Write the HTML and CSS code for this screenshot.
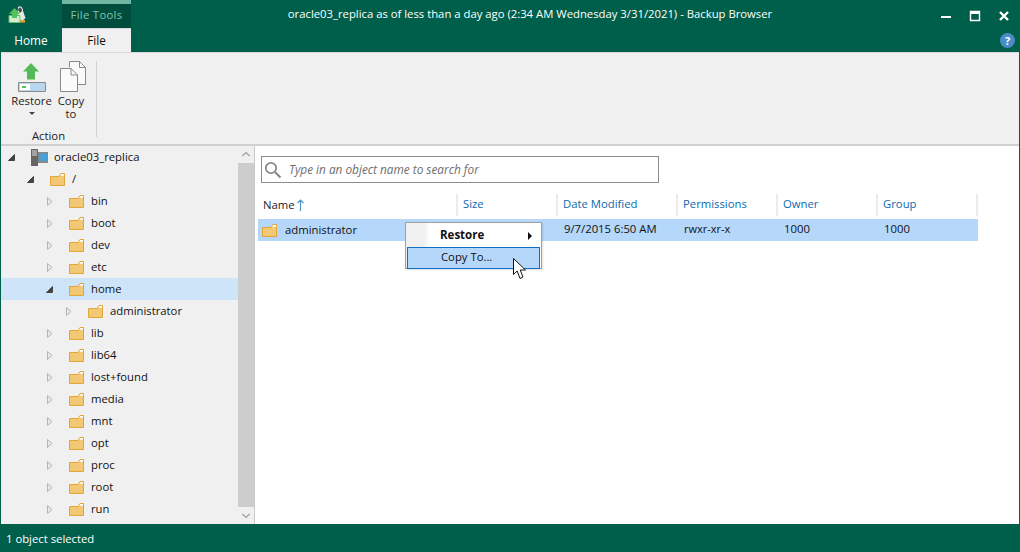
FILE: index.html
```html
<!DOCTYPE html>
<html lang="en">
<head>
<meta charset="utf-8">
<title>Backup Browser</title>
<link rel="stylesheet" href="styles.css">
</head>
<body>
<svg class="defs" width="0" height="0" aria-hidden="true">
  <symbol id="folder" viewBox="0 0 15 14">
    <path d="M.5 4.5H9L11 1.5H14.5V13.5H.5Z" fill="#f3c874" stroke="#e2a537"/>
    <path d="M10 3.8L11.4 2H14V3.8Z" fill="#fff"/>
  </symbol>
  <symbol id="closed" viewBox="0 0 6 9">
    <path d="M.5.5L5 4.5L.5 8.5Z" fill="#e8e8e8" stroke="#b4b4b4"/>
  </symbol>
  <symbol id="open" viewBox="0 0 7 7">
    <path d="M6.5.5V6.5H.5Z" fill="#444" stroke="#444"/>
  </symbol>
</svg>
<div class="window">
  <header class="top">
    <div class="titlebar">
      <div class="app-slot">
        <svg width="18" height="17" viewBox="0 0 18 17">
          <path d="M10 1C13 -1 15 2 15 5L17.500 12L14 15H9Z" fill="#e6ece8"/>
          <path d="M11 1.500C13 1 14 3 14 5L12 7L10 4Z" fill="#4a4a4a"/>
          <path d="M12 14H17V16.500H12Z" fill="#f0a030"/>
          <path d="M1 9.500H12V16.500H1Z" fill="#d6ecd0" stroke="#63bf6b"/>
          <path d="M6.500 2L12 8H9V12H4V8H1Z" fill="#4fc25a"/>
        </svg>
      </div>
      <div class="ctx-tab">File Tools</div>
      <div class="title">oracle03_replica as of less than a day ago (2:34 AM Wednesday 3/31/2021) - Backup Browser</div>
      <div class="controls">
        <svg width="12" height="12" viewBox="0 0 12 12"><path d="M1 6H11V8H1Z" fill="#fff"/></svg>
        <svg width="12" height="12" viewBox="0 0 12 12"><path d="M1.5 1.5H10.5V10.5H1.5Z" fill="none" stroke="#fff" stroke-width="1.4"/><path d="M1 1H11V4H1Z" fill="#fff"/></svg>
        <svg width="12" height="12" viewBox="0 0 12 12"><path d="M2 2L10 10M10 2L2 10" stroke="#fff" stroke-width="2.4"/></svg>
      </div>
    </div>
    <div class="tabbar">
      <div class="tab">Home</div>
      <div class="tab tab-active">File</div>
      <div class="help">?</div>
    </div>
  </header>
  <section class="ribbon">
    <div class="group">
      <div class="group-items">
        <div class="rbtn rbtn-restore">
          <svg width="30" height="30" viewBox="0 0 30 30">
            <path d="M14 0L22 8.500H18V16.500H10V8.500H6Z" fill="#55b957"/>
            <path d="M1.5 19.5H28.5V28.5H1.5Z" fill="#bad6ef" stroke="#8a8a8a"/>
            <path d="M3 21H13V27H3Z" fill="#fff"/>
            <path d="M5 23H9V25H5Z" fill="#55c157"/>
          </svg>
          <span class="rlabel">Restore</span>
          <span class="caret"></span>
        </div>
        <div class="rbtn rbtn-copy">
          <svg class="copy-icon" width="26" height="31" viewBox="0 0 26 31">
            <path d="M9.5 6V.5H19.5L25.5 6.5V23.5H16" fill="#fafafa" stroke="#8a8a8a"/>
            <path d="M19.5.5V6.5H25.5" fill="none" stroke="#8a8a8a"/>
            <path d="M.5 7.5H11L17.5 14V30.5H.5Z" fill="#fafafa" stroke="#8a8a8a"/>
            <path d="M11 7.5V14H17.5" fill="none" stroke="#8a8a8a"/>
          </svg>
          <span class="rlabel">Copy<br>to</span>
        </div>
      </div>
      <div class="group-name">Action</div>
    </div>
  </section>
  <main class="content">
    <aside class="tree-pane">
      <div class="tree">
        <div class="node d0"><svg class="tw" width="7" height="7"><use href="#open"/></svg><svg class="server" width="17" height="17" viewBox="0 0 17 17"><path d="M0 0H7V17H0Z" fill="#666"/><path d="M1 2H6M1 4H6M1 6H6" stroke="#ddd"/><path d="M7 3H17V14H7Z" fill="#888"/><path d="M9 4.500H16V12H9Z" fill="#4a9fd6"/></svg><span>oracle03_replica</span></div>
        <div class="node d1"><svg class="tw" width="7" height="7"><use href="#open"/></svg><svg class="fd" width="15" height="14"><use href="#folder"/></svg><span>/</span></div>
        <div class="node d2"><svg class="tw tw-c" width="6" height="9"><use href="#closed"/></svg><svg class="fd" width="15" height="14"><use href="#folder"/></svg><span>bin</span></div>
        <div class="node d2"><svg class="tw tw-c" width="6" height="9"><use href="#closed"/></svg><svg class="fd" width="15" height="14"><use href="#folder"/></svg><span>boot</span></div>
        <div class="node d2"><svg class="tw tw-c" width="6" height="9"><use href="#closed"/></svg><svg class="fd" width="15" height="14"><use href="#folder"/></svg><span>dev</span></div>
        <div class="node d2"><svg class="tw tw-c" width="6" height="9"><use href="#closed"/></svg><svg class="fd" width="15" height="14"><use href="#folder"/></svg><span>etc</span></div>
        <div class="node d2 node-sel"><svg class="tw" width="7" height="7"><use href="#open"/></svg><svg class="fd" width="15" height="14"><use href="#folder"/></svg><span>home</span></div>
        <div class="node d3"><svg class="tw tw-c" width="6" height="9"><use href="#closed"/></svg><svg class="fd" width="15" height="14"><use href="#folder"/></svg><span>administrator</span></div>
        <div class="node d2"><svg class="tw tw-c" width="6" height="9"><use href="#closed"/></svg><svg class="fd" width="15" height="14"><use href="#folder"/></svg><span>lib</span></div>
        <div class="node d2"><svg class="tw tw-c" width="6" height="9"><use href="#closed"/></svg><svg class="fd" width="15" height="14"><use href="#folder"/></svg><span>lib64</span></div>
        <div class="node d2"><svg class="tw tw-c" width="6" height="9"><use href="#closed"/></svg><svg class="fd" width="15" height="14"><use href="#folder"/></svg><span>lost+found</span></div>
        <div class="node d2"><svg class="tw tw-c" width="6" height="9"><use href="#closed"/></svg><svg class="fd" width="15" height="14"><use href="#folder"/></svg><span>media</span></div>
        <div class="node d2"><svg class="tw tw-c" width="6" height="9"><use href="#closed"/></svg><svg class="fd" width="15" height="14"><use href="#folder"/></svg><span>mnt</span></div>
        <div class="node d2"><svg class="tw tw-c" width="6" height="9"><use href="#closed"/></svg><svg class="fd" width="15" height="14"><use href="#folder"/></svg><span>opt</span></div>
        <div class="node d2"><svg class="tw tw-c" width="6" height="9"><use href="#closed"/></svg><svg class="fd" width="15" height="14"><use href="#folder"/></svg><span>proc</span></div>
        <div class="node d2"><svg class="tw tw-c" width="6" height="9"><use href="#closed"/></svg><svg class="fd" width="15" height="14"><use href="#folder"/></svg><span>root</span></div>
        <div class="node d2"><svg class="tw tw-c" width="6" height="9"><use href="#closed"/></svg><svg class="fd" width="15" height="14"><use href="#folder"/></svg><span>run</span></div>
        <div class="node d2"><svg class="fd" width="15" height="14"><use href="#folder"/></svg></div>
      </div>
      <div class="scrollbar">
        <svg class="sb-arrow" width="17" height="17" viewBox="0 0 17 17"><path d="M4.500 10L8.500 6.500L12.500 10" fill="none" stroke="#a6a6a6" stroke-width="1.500"/></svg>
        <div class="sb-thumb"></div>
        <svg class="sb-arrow" width="17" height="17" viewBox="0 0 17 17"><path d="M4.500 7L8.500 10.500L12.500 7" fill="none" stroke="#a6a6a6" stroke-width="1.500"/></svg>
      </div>
    </aside>
    <section class="list-pane">
      <div class="search">
        <svg width="18" height="18" viewBox="0 0 18 18"><circle cx="7" cy="7" r="5.200" fill="none" stroke="#8a8a8a" stroke-width="1.800"/><path d="M11 11L16.500 16.500" stroke="#8a8a8a" stroke-width="2.200"/></svg>
        <span class="search-hint">Type in an object name to search for</span>
      </div>
      <div class="grid grid-head">
        <div class="hcell hcell-name">Name<svg width="7" height="12" viewBox="0 0 7 12"><path d="M3.500 1V12M.5 4L3.500 1L6.500 4" fill="none" stroke="#4d96c8" stroke-width="1.200"/></svg></div>
        <div class="hcell">Size</div>
        <div class="hcell">Date Modified</div>
        <div class="hcell">Permissions</div>
        <div class="hcell">Owner</div>
        <div class="hcell">Group</div>
      </div>
      <div class="grid grid-row">
        <div class="cell cell-name"><svg class="fd" width="15" height="14"><use href="#folder"/></svg>administrator</div>
        <div class="cell"></div>
        <div class="cell">9/7/2015 6:50 AM</div>
        <div class="cell cell-perm">rwxr-xr-x</div>
        <div class="cell">1000</div>
        <div class="cell">1000</div>
      </div>
      <div class="menu">
        <div class="mitem mitem-bold">Restore<span class="mcaret"></span></div>
        <div class="mitem mitem-hot">Copy To...</div>
      </div>
      <svg class="cursor" width="14" height="22" viewBox="0 0 14 22"><path d="M.5.5V16.500L4.200 13L7 20.500L10 19L7.200 12H12.500Z" fill="#fff" stroke="#111"/></svg>
    </section>
  </main>
  <footer class="status">1 object selected</footer>
</div>
</body>
</html>
```
FILE: styles.css
```css
* { box-sizing: border-box; }
html, body { margin: 0; padding: 0; }
body { font-family: "Open Sans", "Noto Sans", "Liberation Sans", sans-serif; font-size: 11.3px; color: #111; overflow: hidden; }
.defs { position: absolute; }
svg { display: block; flex: none; }

.window { width: 1020px; height: 552px; display: flex; flex-direction: column; background: #005f4b; padding: 0 1px; }

.top { height: 52px; margin: 0 -1px; flex: none; color: #fff; }
.titlebar { height: 28px; display: flex; position: relative; }
.app-slot { width: 62px; padding: 6px 0 0 8px; }
.ctx-tab { width: 69px; background: #004d3d; border-top: 4px solid #6fb5a2; color: #7fc4b0; text-align: center; line-height: 21px; letter-spacing: .3px; }
.title { flex: 1; text-align: center; line-height: 28px; padding-right: 10px; margin-left: -1px; }
.controls { display: flex; gap: 17px; padding: 10px 10px 0 0; }
.tabbar { height: 24px; display: flex; align-items: stretch; }
.tab { width: 62px; text-align: center; line-height: 24px; font-size: 11.8px; }
.tab-active { width: 69px; background: #f0f0f0; color: #111; border-top: 1px solid #d8d8d8; line-height: 23px; }
.help { margin: 5px 5px 0 auto; width: 15px; height: 15px; border-radius: 50%; background: #4a8dc6; color: #fff; font-weight: 700; font-size: 11px; line-height: 15px; text-align: center; }

.ribbon { height: 94px; flex: none; background: #f0f0f0; border-bottom: 2px solid #d0d0d0; border-top: 1px solid #dcdcdc; display: flex; }
.group { width: 96px; height: 76px; margin-top: 8px; border-right: 1px solid #d2d2d2; display: flex; flex-direction: column; }
.group-items { display: flex; height: 67px; flex: none; }
.rbtn { display: flex; flex-direction: column; align-items: center; text-align: center; line-height: 13px; }
.rbtn-restore { width: 39px; margin-left: 11px; padding-top: 2px; }
.rbtn-copy { width: 40px; margin-left: 0; }
.copy-icon { margin-left: 3px; }
.rlabel { display: block; color: #222; }
.rbtn-restore .rlabel { margin-top: 1px; }
.rbtn-copy .rlabel { margin-top: 2px; }
.caret { width: 0; height: 0; margin-top: 5px; border: 3px solid transparent; border-top-color: #444; border-bottom-width: 0; }
.group-name { flex: none; text-align: center; line-height: 16px; color: #222; }

.content { flex: 1; min-height: 0; display: flex; background: #fff; }
.tree-pane { width: 254px; background: #f0f0f0; border-right: 1px solid #c8c8c8; display: flex; position: relative; overflow: hidden; }
.tree { flex: 1; min-width: 0; overflow: hidden; }
.node { height: 22px; display: flex; align-items: center; position: relative; white-space: nowrap; }
.node span { margin-left: 7px; position: relative; top: -1px; }
.node .tw { position: absolute; top: 8px; }
.node .tw-c { top: 7px; }
.d0 { padding-left: 30px; }
.d0 .tw { left: 7px; }
.d0 span { margin-left: 6px; }
.d1 { padding-left: 49px; }
.d1 .tw { left: 26px; }
.d2 { padding-left: 68px; }
.d2 .tw { left: 45px; }
.d3 { padding-left: 87px; }
.d3 .tw { left: 65px; }
.d2 .tw-c { left: 46px; }
.node-sel { background: #cee4f9; }
.scrollbar { width: 16px; flex: none; display: flex; flex-direction: column; background: #f0f0f0; }
.sb-arrow { width: 16px; }
.sb-thumb { flex: 1; background: #cdcdcd; }

.list-pane { flex: 1; position: relative; padding: 10px 41px 0 3px; min-width: 0; }
.search { width: 398px; height: 27px; margin-left: 3px; border: 1px solid #8c8c8c; display: flex; align-items: center; padding-left: 2px; gap: 7px; color: #6e6e6e; font-style: italic; font-size: 11.8px; }
.search-hint { line-height: 14px; margin-bottom: 2px; }
.grid { display: grid; grid-template-columns: 200px 100px 120px 100px 100px 100px; width: 720px; }
.grid-head { margin-top: 11px; height: 22px; color: #0a6ab0; }
.hcell { padding-left: 5px; line-height: 20px; border-right: 2px solid #ececec; }
.hcell-name { color: #222; display: flex; align-items: center; gap: 2px; }
.grid-row { margin-top: 3px; height: 22px; background: #b5d7fa; }
.cell { padding-left: 6px; line-height: 20px; color: #111; white-space: nowrap; }
.cell-name { padding-left: 4px; display: flex; align-items: center; gap: 8px; }
.cell-perm { font-size: 11px; }

.menu { position: absolute; left: 150px; top: 76px; width: 137px; height: 47px; border: 1px solid #a0a0a0; background: linear-gradient(90deg, #f0f0f0 0, #f0f0f0 18px, #fff 24px); padding: 1px; box-shadow: 1px 1px 2px rgba(0,0,0,.12); }
.mitem { height: 23px; line-height: 22px; padding-left: 33px; position: relative; }
.mitem-bold { font-weight: 700; font-size: 11.5px; }
.mitem-hot { height: 22px; background: #b5d7fa; border: 1px solid #0f6fc6; line-height: 18px; }
.mcaret { position: absolute; right: 8px; top: 8px; border: 4px solid transparent; border-left-color: #111; border-right-width: 0; }
.cursor { position: absolute; left: 258px; top: 112px; }

.status { height: 28px; flex: none; margin: 0 -1px; padding-left: 6px; line-height: 29px; color: #fff; }
```
